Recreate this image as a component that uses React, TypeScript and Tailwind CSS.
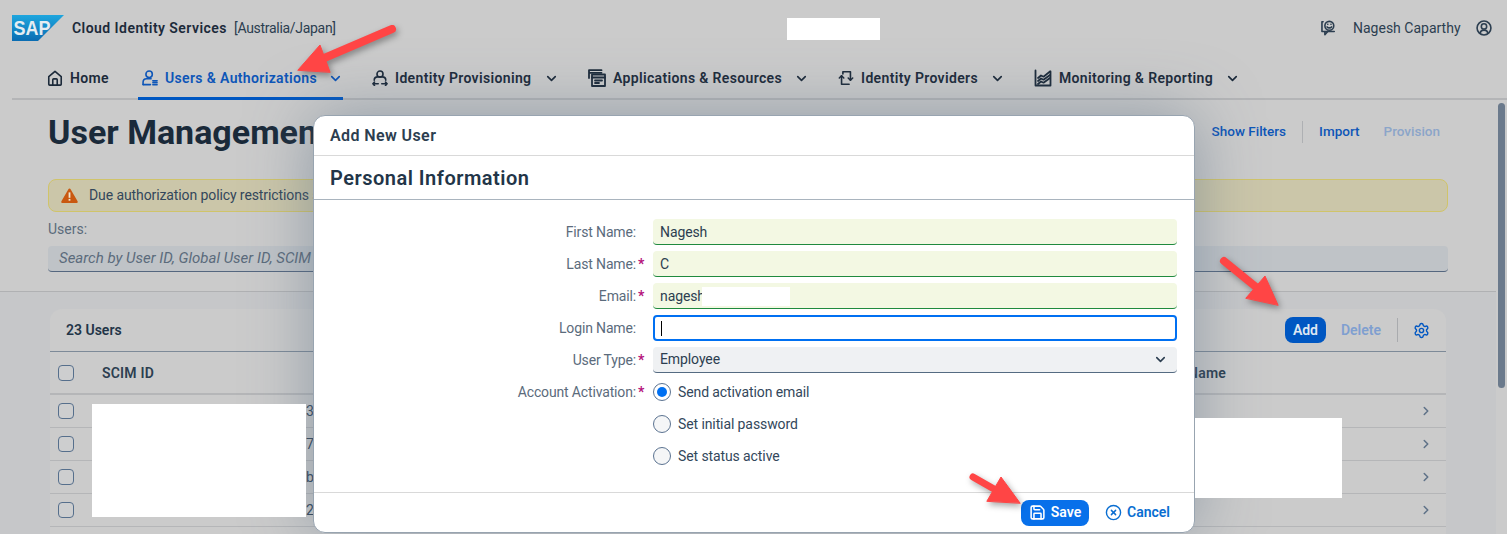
import { ChevronDown, ChevronRight, CircleX, Save, Settings } from "lucide-react";
import type { ReactNode } from "react";

const FONT = "font-['Roboto','Liberation_Sans',sans-serif]";

const Icon = ({ children, size = 16 }: { children: ReactNode; size?: number }) => (
  <svg
    width={size}
    height={size}
    viewBox="0 0 18 18"
    fill="none"
    stroke="currentColor"
    strokeWidth="1.8"
    strokeLinecap="round"
    strokeLinejoin="round"
    className="shrink-0"
  >
    {children}
  </svg>
);

const HomeIcon = () => (
  <Icon>
    <path d="M2 16V7.5L9 1.5l7 6V16a1 1 0 0 1-1 1H3a1 1 0 0 1-1-1Z" />
    <path d="M6.5 17v-6a1 1 0 0 1 1-1h3a1 1 0 0 1 1 1v6" />
  </Icon>
);

const UsersIcon = () => (
  <Icon>
    <circle cx="8" cy="4.8" r="3.6" />
    <path d="M1.2 16.4v-2.6c0-2.4 1.8-4 4-4h5" />
    <path d="M1.2 16.4h8.3M12.2 12.2h4.8M12.2 14.4h4.8M12.2 16.6h4.8" />
  </Icon>
);

const ProvisioningIcon = () => (
  <Icon>
    <circle cx="9" cy="4.6" r="3.4" />
    <path d="M2.5 11.5c0-2.4 2-3.8 4-3.8h5c2 0 4 1.4 4 3.8" />
    <path d="M1 15.5h6M2.8 13.6 1 15.5l1.8 1.9M11 15.5h6M15.2 13.6l1.8 1.9-1.8 1.9" />
  </Icon>
);

const ApplicationsIcon = () => (
  <Icon size={18}>
    <path d="M1 9V1.2h12.5M1 3.8h12.5" strokeWidth="1.8" />
    <rect x="4" y="5.5" width="13" height="11.5" />
    <path d="M4 8.5h13M7 11.5h7M7 14h4" />
  </Icon>
);

const ProvidersIcon = () => (
  <Icon>
    <path d="M5.5 4.5v-2.5h8.5v9.5" />
    <path d="M11.5 9l2.5 2.5L16.5 9M12.5 16H4V6.5" />
    <path d="M1.5 9 4 6.5 6.5 9" />
  </Icon>
);

const MonitoringIcon = () => (
  <Icon size={18}>
    <path d="M1.5 1.5V16.5h15V2.5" />
    <path d="M4 9l3-2.5 2.5 1.2L16 2.5M4 12l3-2.5 2.5 1.2L16 6M4 15l3-2.5 2.5 1.2 6.5-4.7" />
  </Icon>
);

const FeedbackIcon = () => (
  <Icon>
    <path d="M3.5 2H2.2v11h3.3V16.5l3.2-3.5" />
    <circle cx="10.5" cy="6.5" r="5" />
    <path d="M8 7.8c1.2 1.4 3.8 1.4 5 0M8.7 4.7h.1M12.3 4.7h.1M6 13h10" />
  </Icon>
);

const AccountIcon = () => (
  <Icon>
    <circle cx="9" cy="9" r="7.8" />
    <circle cx="9" cy="7.2" r="3" />
    <path d="M4.6 14.6c.6-2.2 2.3-3.2 4.4-3.2s3.8 1 4.4 3.2" />
  </Icon>
);

const WarningIcon = () => (
  <svg width="17" height="15" viewBox="0 0 17 15" className="shrink-0">
    <path d="M8.5 0.5c.5 0 .9.3 1.1.7l7 12c.4.8-.1 1.8-1 1.8H1.4c-.9 0-1.4-1-1-1.8l7-12c.2-.4.6-.7 1.1-.7Z" fill="#c9580f" />
    <rect x="7.6" y="4.4" width="1.8" height="5.4" fill="#f1e6cf" />
    <rect x="7.6" y="10.9" width="1.8" height="1.8" fill="#f1e6cf" />
  </svg>
);

const SapLogo = () => (
  <svg width="52" height="26" viewBox="0 0 52 26" className="shrink-0">
    <defs>
      <linearGradient id="sap" x1="0" y1="0" x2="0" y2="1">
        <stop offset="0" stopColor="#1ea6de" />
        <stop offset="1" stopColor="#0a6cb2" />
      </linearGradient>
    </defs>
    <path d="M0 0h52L26 26H0Z" fill="url(#sap)" />
    <text
      x="1.5"
      y="20"
      fill="#e4edf2"
      fontFamily="'Liberation Sans', sans-serif"
      fontSize="21"
      fontWeight="700"
      textLength="37"
      lengthAdjust="spacingAndGlyphs"
    >
      SAP
    </text>
  </svg>
);

const navItems = [
  { label: "Users & Authorizations", icon: <UsersIcon />, width: "w-[151px]", active: true },
  { label: "Identity Provisioning", icon: <ProvisioningIcon />, width: "w-[137px]", active: false },
  { label: "Applications & Resources", icon: <ApplicationsIcon />, width: "w-[169px]", active: false },
  { label: "Identity Providers", icon: <ProvidersIcon />, width: "w-[117px]", active: false },
  { label: "Monitoring & Reporting", icon: <MonitoringIcon />, width: "w-[154px]", active: false },
];

const Checkbox = () => (
  <span className="block h-4 w-4 rounded-[4px] border border-[#566f8c] bg-[#cdcecf]" />
);

const rows = ["38", "7c", "b5", "2c", ""];

const formFieldClass =
  "h-[26px] rounded-[4px] border-b border-[#1f8a3e] bg-[#f3f8e3] px-[7px] pt-[1px] text-[14px] tracking-[-0.1px] text-[#2c3e50] outline-none";

const FormLabel = ({ text, required }: { text: string; required?: boolean }) => (
  <div className="flex h-[26px] items-center justify-end pt-[1px] text-[14px] tracking-[-0.15px] text-[#5b6b7c]">
    <span>{text}</span>
    <span className="w-[17px] pl-[2px] font-bold text-[#b5127b]">{required ? "*" : ""}</span>
  </div>
);

const Radio = ({ label, checked }: { label: string; checked?: boolean }) => (
  <div className="flex h-[26px] items-center gap-[7px] text-[14px] tracking-[-0.1px] text-[#33475b]">
    <span
      className={
        checked
          ? "flex h-[18px] w-[18px] items-center justify-center rounded-full border border-[#5b7391] bg-white"
          : "h-[18px] w-[18px] rounded-full border border-[#5b7391] bg-[#f5f6f7]"
      }
    >
      {checked && <span className="h-[10px] w-[10px] rounded-full bg-[#0070f2]" />}
    </span>
    {label}
  </div>
);

const AddUserDialog = () => (
  <div className="absolute left-[313px] top-[115px] flex h-[418px] w-[882px] flex-col overflow-hidden rounded-xl border border-[#98a4b0] bg-white shadow-[0_0_64px_rgba(85,107,130,0.5)]">
    <div className="flex h-[40px] shrink-0 items-center border-b border-[#d9d9d9] px-4 text-[16px] font-semibold tracking-[0.4px] text-[#2c3e50]">
      Add New User
    </div>
    <div className="flex h-[44px] shrink-0 items-center border-b border-[#a9b4be] px-4 pt-[1px] text-[20px] font-semibold tracking-[0.5px] text-[#223548]">
      Personal Information
    </div>
    <div className="grid flex-1 grid-cols-[339px_524px] content-start gap-y-[6px] pt-[19px]">
      <FormLabel text="First Name:" />
      <input readOnly defaultValue="Nagesh" className={formFieldClass} />
      <FormLabel text="Last Name:" required />
      <input readOnly defaultValue="C" className={formFieldClass} />
      <FormLabel text="Email:" required />
      <div className={`relative flex items-center ${formFieldClass}`}>
        nagesh
        <span className="absolute left-[49px] top-[4px] h-[19px] w-[88px] bg-white" />
      </div>
      <FormLabel text="Login Name:" />
      <div className="flex h-[26px] items-center rounded-[4px] border-2 border-[#0070f2] bg-white px-[6px]">
        <span className="h-[15px] w-px bg-black" />
      </div>
      <FormLabel text="User Type:" required />
      <div className="flex h-[26px] items-center justify-between rounded-[4px] border-b border-[#556b82] bg-[#eff1f3] px-[7px] text-[14px] tracking-[-0.1px] text-[#2c3e50]">
        Employee
        <ChevronDown size={15} strokeWidth={2.5} className="mr-[2px] text-[#2c3e50]" />
      </div>
      <FormLabel text="Account Activation:" required />
      <Radio label="Send activation email" checked />
      <div />
      <Radio label="Set initial password" />
      <div />
      <Radio label="Set status active" />
    </div>
    <div className="flex h-[40px] shrink-0 items-center justify-end gap-2 border-t border-[#d9d9d9] pr-[16px] text-[14px] font-semibold">
      <button className="flex h-[26px] w-[68px] items-center justify-center gap-[5px] rounded-lg bg-[#0870ea] text-white">
        <Save size={17} strokeWidth={2.2} />
        Save
      </button>
      <button className="flex h-[26px] w-[81px] items-center gap-[5px] px-2 text-[#0a6ed1]">
        <CircleX size={17} strokeWidth={2} />
        Cancel
      </button>
    </div>
  </div>
);

const Arrows = () => (
  <svg
    width="1507"
    height="534"
    viewBox="0 0 1507 534"
    className="pointer-events-none absolute left-0 top-0 drop-shadow-[2px_3px_3px_rgba(0,0,0,0.35)]"
  >
    <g fill="#ff4545" stroke="#ff4545" strokeLinecap="round" strokeLinejoin="round">
      <path d="M392 29 322 59" strokeWidth="8" fill="none" />
      <path d="M298 70 320 45 330 72Z" strokeWidth="1" />
      <path d="M1224 261 1256 287" strokeWidth="8" fill="none" />
      <path d="M1278 305 1265 276 1246 298Z" strokeWidth="1" />
      <path d="M973 477 994 489" strokeWidth="7" fill="none" />
      <path d="M1020 503 1001 477 987 501Z" strokeWidth="1" />
    </g>
  </svg>
);

export default function App() {
  return (
    <div className={`relative h-[534px] w-[1507px] overflow-hidden bg-[#cbcbcb] ${FONT}`}>
      <header className="flex h-[58px] items-center pb-[2px] pl-3 pr-[15px]">
        <SapLogo />
        <span className="ml-2 w-[154px] whitespace-nowrap text-[14px] font-semibold tracking-[0.45px] text-[#1c2a3a]">
          Cloud Identity Services
        </span>
        <span className="ml-2 text-[14px] tracking-[-0.3px] text-[#2c3e50]">[Australia/Japan]</span>
        <div className="ml-auto flex items-center gap-[17px] text-[14px] text-[#2c3e50]">
          <FeedbackIcon />
          <span className="w-[106px] whitespace-nowrap">Nagesh Caparthy</span>
          <AccountIcon />
        </div>
      </header>

      <nav className="ml-3 flex h-[42px] gap-[25px] border-b-2 border-[#b4b5b7] bg-[#cbcbcb] pl-[31px] text-[14px] font-semibold tracking-[0.35px] text-[#1c2a3a]">
        <div className="flex items-center gap-[7px] px-1">
          <HomeIcon />
          <span className="w-[39px]">Home</span>
        </div>
        {navItems.map((item) => (
          <div
            key={item.label}
            className={
              item.active
                ? "-mb-[2px] flex items-center border-b-[3px] border-[#0057c2] pl-1 pt-[1px] text-[#0e56b8]"
                : "flex items-center pl-1"
            }
          >
            {item.icon}
            <span className={`ml-[7px] whitespace-nowrap ${item.width}`}>{item.label}</span>
            <ChevronDown size={15} strokeWidth={2.6} className="ml-[12px]" />
          </div>
        ))}
      </nav>

      <div className="flex">
        <main className="w-[1496px]">
          <section className="h-[192px] border-b border-[#b0b1b3] pl-12 pr-[48px] pt-4">
            <div className="flex h-8 items-center justify-between pr-2">
              <h1 className="text-[34px] font-bold text-[#1a2a3a]">User Management</h1>
              <div className="flex items-center pb-[1px] text-[13.5px] font-medium text-[#0e56b8]">
                <span>Show Filters</span>
                <span className="mx-4 h-[22px] w-px bg-[#aeb0b3]" />
                <span>Import</span>
                <span className="ml-6 text-[#8ba5c9]">Provision</span>
              </div>
            </div>
            <div className="mt-[31px] flex h-[33px] items-center gap-[11px] rounded-lg border border-[#d0c46a] bg-[#cbc6a9] pl-[12px] text-[14px] tracking-[-0.1px] text-[#33475b]">
              <WarningIcon />
              Due authorization policy restrictions some users may not be displayed
            </div>
            <div className="mt-[7px] text-[14px] text-[#5b6b7c]">Users:</div>
            <div className="mt-[6px] flex h-[26px] items-center rounded-[4px] border-b border-[#55677f] bg-[#bfc3c7] pl-[11px] text-[15px] italic text-[#5b6b7c]">
              Search by User ID, Global User ID, SCIM ID
            </div>
          </section>

          <section className="h-[242px] bg-[#c6c7c9] pl-[50px] pr-[50px] pt-[17px]">
            <div className="rounded-t-xl bg-[#cbcbcb]">
              <div className="flex h-[43px] items-center border-b border-[#7d8a98] pl-4 pr-4">
                <span className="text-[14px] font-semibold text-[#223548]">23 Users</span>
                <div className="ml-auto flex items-center text-[14px] font-semibold">
                  <button className="h-[26px] w-[41px] rounded-lg bg-[#0057c2] text-[#dfe8f3]">Add</button>
                  <span className="ml-[15px] text-[#7f9fd0]">Delete</span>
                  <span className="ml-4 h-[24px] w-px bg-[#a9abae]" />
                  <Settings size={17} strokeWidth={2} className="ml-[15px] text-[#0057c2]" />
                </div>
              </div>
              <div className="flex h-[43px] items-center border-b-2 border-[#b5b6b8] pt-[1px] text-[14px] font-semibold tracking-[0.2px] text-[#2c3e50]">
                <span className="px-2">
                  <Checkbox />
                </span>
                <span className="ml-[20px]">SCIM ID</span>
                <span className="ml-auto mr-[220px]">Last Name</span>
              </div>
              {rows.map((tail, index) => (
                <div key={index} className="flex h-[33px] items-center border-b border-[#b5b6b8] text-[14px] text-[#33475b]">
                  <span className="px-2">
                    <Checkbox />
                  </span>
                  <span className="ml-[224px]">{tail}</span>
                  <ChevronRight size={14} strokeWidth={2.6} className="ml-auto mr-[13px] text-[#5f7288]" />
                </div>
              ))}
            </div>
          </section>
        </main>
        <aside className="flex-1 pl-[2px] pt-[3px]">
          <div className="h-[285px] w-[7px] rounded-full bg-[#6b7a8c]" />
        </aside>
      </div>

      <AddUserDialog />

      {/* whited out in the screenshot, painted over everything */}
      <div className="absolute left-[787px] top-[18px] h-[22px] w-[93px] bg-white" />
      <div className="absolute left-[92px] top-[404px] h-[113px] w-[214px] bg-white" />
      <div className="absolute left-[1195px] top-[418px] h-[80px] w-[147px] bg-white" />

      <Arrows />
    </div>
  );
}
